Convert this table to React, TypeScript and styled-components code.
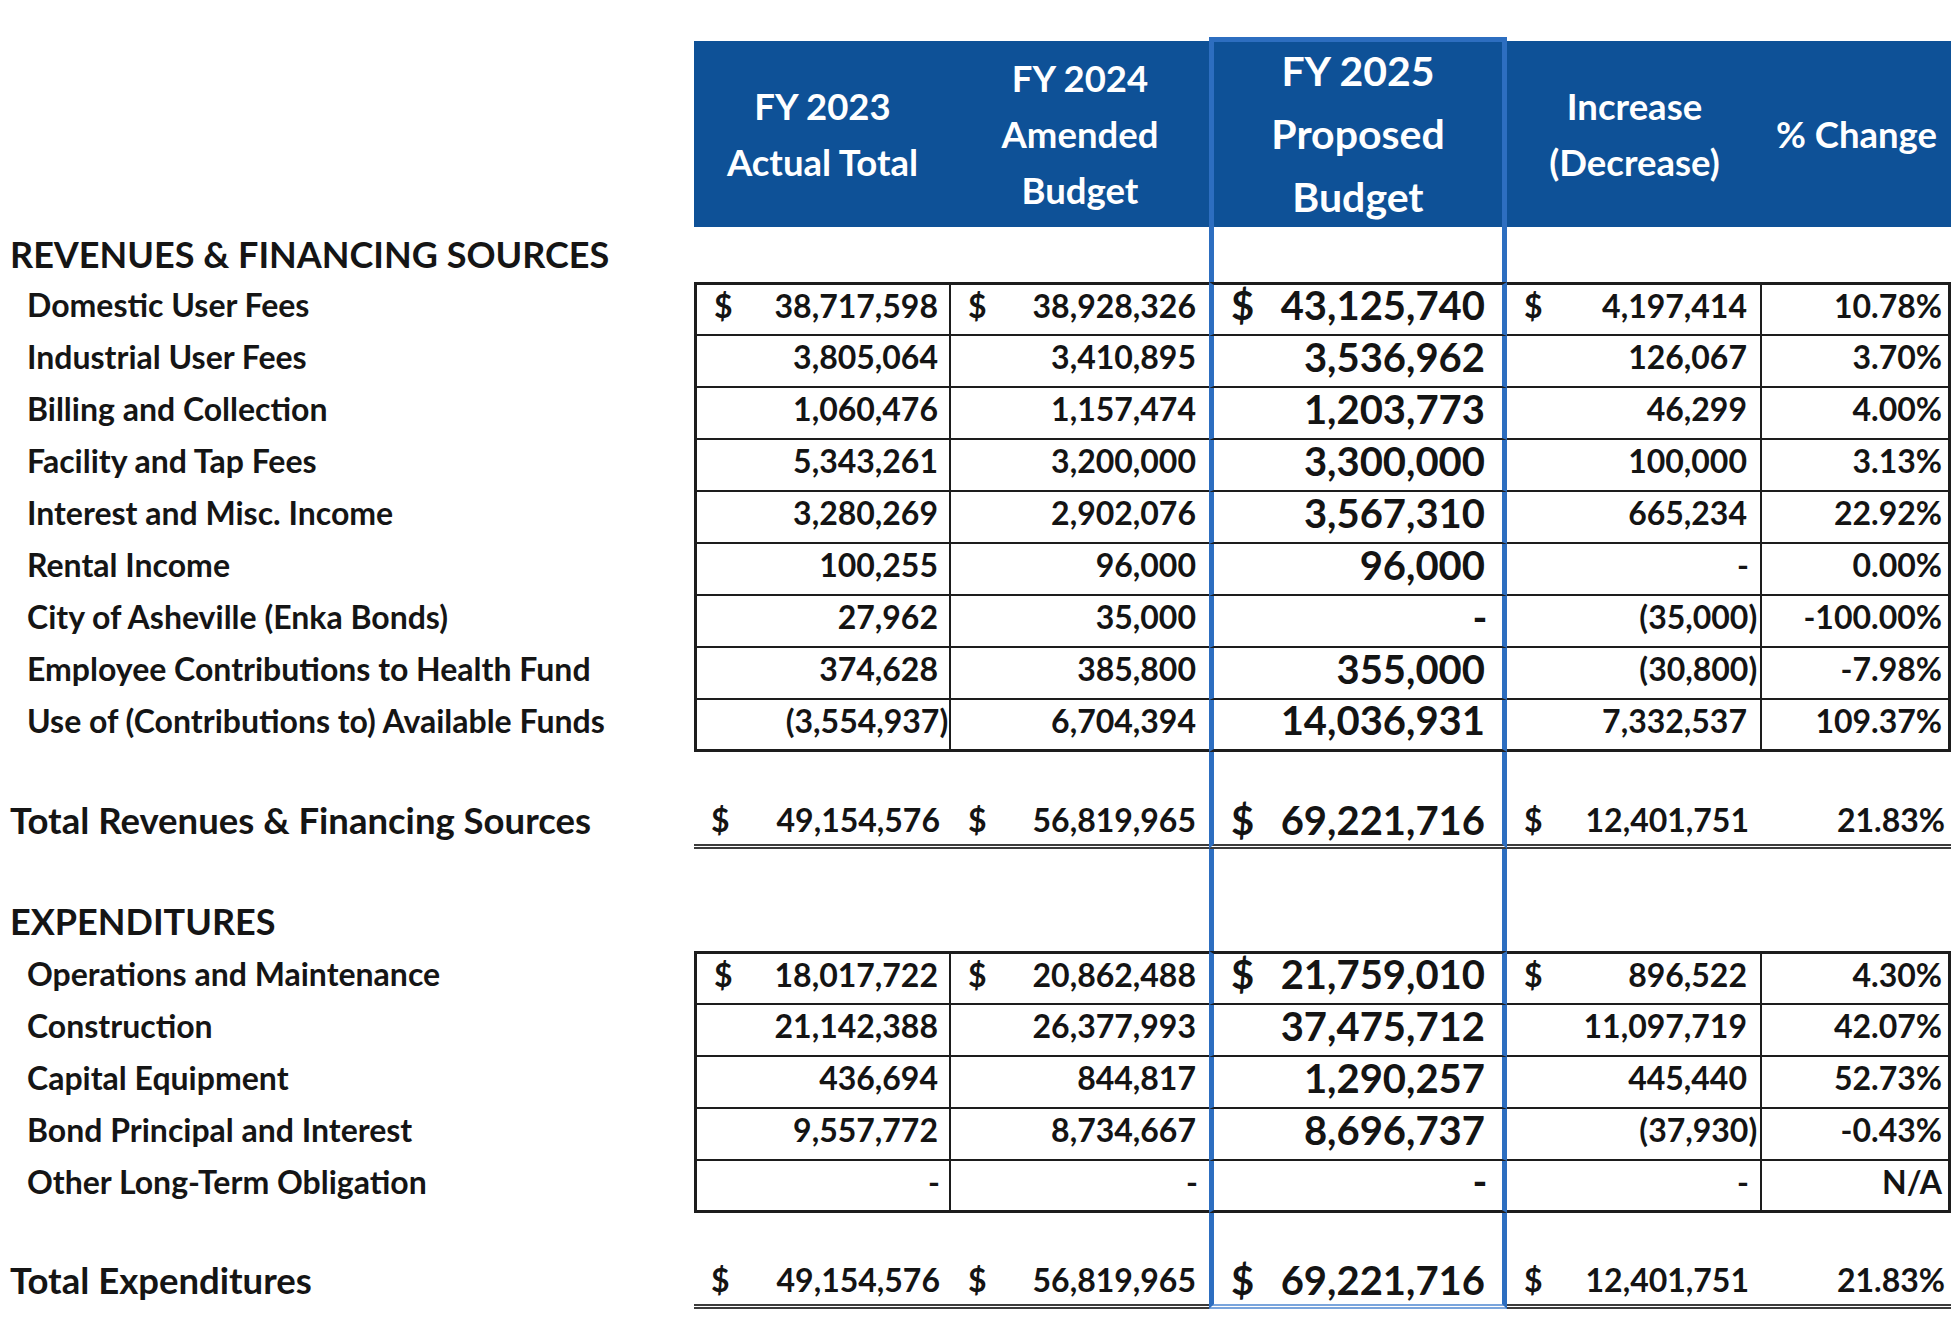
import React from "react";
import styled, { createGlobalStyle, css } from "styled-components";

const INK = "#1d1d1d";
const HEAD_FILL = "#0e5197";
const BLUE_LINE = "#2d6ec0";
const BLUE_SOFT = "#7aa5dc";
const COLS = "694px 257px 258px 298px 255px 189px";

type Col = 1 | 2 | 3 | 4 | 5;

const GlobalStyle = createGlobalStyle`
  html, body { margin: 0; padding: 0; background: #ffffff; }
  body {
    font-family: Lato, "Open Sans", "Liberation Sans", sans-serif;
    color: ${INK};
    -webkit-font-smoothing: antialiased;
  }
`;

const Sheet = styled.div`
  width: 1955px;
  padding-top: 41px;
  display: flex;
  flex-direction: column;
  box-sizing: border-box;
`;

const Row = styled.div<{ $h: number }>`
  display: grid;
  grid-template-columns: ${COLS};
  grid-template-rows: ${(p) => p.$h}px;
  height: ${(p) => p.$h}px;
  align-items: stretch;
`;

/* ---------- header ---------- */
const HeadCell = styled.div<{ $proposed?: boolean }>`
  box-sizing: border-box;
  background: ${HEAD_FILL};
  color: #ffffff;
  display: flex;
  align-items: center;
  justify-content: center;
  text-align: center;
  font-weight: 700;
  font-size: 36.5px;
  line-height: 56px;
  ${(p) =>
    p.$proposed &&
    css`
      margin-top: -4px;
      border: 5px solid ${BLUE_LINE};
      border-bottom: none;
      font-size: 41px;
      line-height: 63px;
      padding-bottom: 2px;
    `}
`;

const Blank = styled.div``;

/* ---------- labels ---------- */
const Label = styled.div<{ $kind: "item" | "section" | "total"; $bottom?: number; $lh?: number }>`
  display: flex;
  align-items: ${(p) => (p.$kind === "item" ? "center" : "flex-end")};
  padding-left: ${(p) => (p.$kind === "item" ? 27 : 10)}px;
  padding-bottom: ${(p) => p.$bottom ?? 0}px;
  font-weight: 700;
  font-size: ${(p) => (p.$kind === "item" ? 32 : p.$kind === "section" ? 36 : 36.5)}px;
  line-height: ${(p) => p.$lh ?? 52}px;
  white-space: nowrap;
  color: #151515;
  box-sizing: border-box;
`;

/* ---------- cells ---------- */
const sideEdges = (col: Col, boxed: boolean) => {
  if (col === 3) return css`border-left: 5px solid ${BLUE_LINE}; border-right: 5px solid ${BLUE_LINE};`;
  if (!boxed) return css``;
  if (col === 1) return css`border-left: 3px solid ${INK}; border-right: 2px solid ${INK};`;
  if (col === 4) return css`border-right: 2px solid ${INK};`;
  if (col === 5) return css`border-right: 3px solid ${INK};`;
  return css``;
};

const rightPad = (col: Col) => (col === 1 ? 11 : col === 3 ? 17 : col === 5 ? 6 : 13);

const DataCell = styled.div<{ $col: Col; $first?: boolean; $last?: boolean }>`
  box-sizing: border-box;
  display: flex;
  align-items: center;
  justify-content: ${(p) => (p.$col === 5 ? "flex-end" : "space-between")};
  padding: 0 ${(p) => rightPad(p.$col)}px 9px 17px;
  border-bottom: ${(p) => (p.$last ? 3 : 2)}px solid ${INK};
  ${(p) => p.$first && css`border-top: 3px solid ${INK};`}
  ${(p) => sideEdges(p.$col, true)}
  font-weight: 700;
  font-size: ${(p) => (p.$col === 3 ? 40 : 32)}px;
  white-space: nowrap;
  color: #141414;
`;

const TotalCell = styled.div<{ $col: Col; $closing?: boolean }>`
  box-sizing: border-box;
  display: flex;
  align-items: flex-end;
  justify-content: ${(p) => (p.$col === 5 ? "flex-end" : "space-between")};
  padding: 0 ${(p) => rightPad(p.$col)}px 0 17px;
  line-height: 48px;
  border-bottom: 5px double ${(p) => (p.$col === 3 && p.$closing ? BLUE_SOFT : "#3c3c3c")};
  ${(p) => sideEdges(p.$col, false)}
  font-weight: 700;
  font-size: ${(p) => (p.$col === 3 ? 40 : 32)}px;
  white-space: nowrap;
  color: #141414;
`;

const Channel = styled.div<{ $col?: Col }>`
  box-sizing: border-box;
  ${(p) => p.$col === 3 && css`border-left: 5px solid ${BLUE_LINE}; border-right: 5px solid ${BLUE_LINE};`}
`;

const Dollar = styled.span``;
const Amount = styled.span``;
const Close = styled.span`
  margin-right: -0.32em;
`;
const Dash = styled.span`
  margin-right: -0.06em;
`;

const Value: React.FC<{ v: string }> = ({ v }) => {
  if (v === "-") return <Dash>-</Dash>;
  if (v.startsWith("(") && v.endsWith(")"))
    return (
      <Amount>
        {v.slice(0, -1)}
        <Close>)</Close>
      </Amount>
    );
  return <Amount>{v}</Amount>;
};

type Line = [string, string, string, string, string, string];

const revenues: Line[] = [
  ["Domestic User Fees", "38,717,598", "38,928,326", "43,125,740", "4,197,414", "10.78%"],
  ["Industrial User Fees", "3,805,064", "3,410,895", "3,536,962", "126,067", "3.70%"],
  ["Billing and Collection", "1,060,476", "1,157,474", "1,203,773", "46,299", "4.00%"],
  ["Facility and Tap Fees", "5,343,261", "3,200,000", "3,300,000", "100,000", "3.13%"],
  ["Interest and Misc. Income", "3,280,269", "2,902,076", "3,567,310", "665,234", "22.92%"],
  ["Rental Income", "100,255", "96,000", "96,000", "-", "0.00%"],
  ["City of Asheville (Enka Bonds)", "27,962", "35,000", "-", "(35,000)", "-100.00%"],
  ["Employee Contributions to Health Fund", "374,628", "385,800", "355,000", "(30,800)", "-7.98%"],
  ["Use of (Contributions to) Available Funds", "(3,554,937)", "6,704,394", "14,036,931", "7,332,537", "109.37%"],
];

const expenditures: Line[] = [
  ["Operations and Maintenance", "18,017,722", "20,862,488", "21,759,010", "896,522", "4.30%"],
  ["Construction", "21,142,388", "26,377,993", "37,475,712", "11,097,719", "42.07%"],
  ["Capital Equipment", "436,694", "844,817", "1,290,257", "445,440", "52.73%"],
  ["Bond Principal and Interest", "9,557,772", "8,734,667", "8,696,737", "(37,930)", "-0.43%"],
  ["Other Long-Term Obligation", "-", "-", "-", "-", "N/A"],
];

const totals: string[] = ["49,154,576", "56,819,965", "69,221,716", "12,401,751", "21.83%"];

const DataBlock: React.FC<{ lines: Line[] }> = ({ lines }) => (
  <>
    {lines.map((line, i) => {
      const first = i === 0;
      const last = i === lines.length - 1;
      return (
        <Row key={line[0]} $h={first ? 54 : 52}>
          <Label $kind="item" $bottom={first ? 8 : 10} $lh={42}>{line[0]}</Label>
          {([1, 2, 3, 4, 5] as Col[]).map((c) => (
            <DataCell key={c} $col={c} $first={first} $last={last}>
              {first && c < 5 ? <Dollar>$</Dollar> : <span />}
              <Value v={line[c]} />
            </DataCell>
          ))}
        </Row>
      );
    })}
  </>
);

const SectionRow: React.FC<{ title: string; h: number; bottom: number; lh: number }> = ({ title, h, bottom, lh }) => (
  <Row $h={h}>
    <Label $kind="section" $bottom={bottom} $lh={lh}>{title}</Label>
    <Channel $col={1} />
    <Channel $col={2} />
    <Channel $col={3} />
    <Channel $col={4} />
    <Channel $col={5} />
  </Row>
);

const TotalRow: React.FC<{ title: string; h: number; closing?: boolean }> = ({ title, h, closing }) => (
  <Row $h={h}>
    <Label $kind="total" $bottom={5} $lh={48}>{title}</Label>
    {([1, 2, 3, 4, 5] as Col[]).map((c) => (
      <TotalCell key={c} $col={c} $closing={closing}>
        {c < 5 ? <Dollar>$</Dollar> : <span />}
        <Amount>{totals[c - 1]}</Amount>
      </TotalCell>
    ))}
  </Row>
);

export default function App() {
  return (
    <>
      <GlobalStyle />
      <Sheet>
        <Row $h={186}>
          <Blank />
          <HeadCell>
            FY 2023
            <br />
            Actual Total
          </HeadCell>
          <HeadCell>
            FY 2024
            <br />
            Amended
            <br />
            Budget
          </HeadCell>
          <HeadCell $proposed>
            FY 2025
            <br />
            Proposed
            <br />
            Budget
          </HeadCell>
          <HeadCell>
            Increase
            <br />
            (Decrease)
          </HeadCell>
          <HeadCell>% Change</HeadCell>
        </Row>

        <SectionRow title="REVENUES & FINANCING SOURCES" h={55} bottom={2} lh={52} />
        <DataBlock lines={revenues} />
        <TotalRow title="Total Revenues & Financing Sources" h={97} />

        <SectionRow title="EXPENDITURES" h={102} bottom={3} lh={54} />
        <DataBlock lines={expenditures} />
        <TotalRow title="Total Expenditures" h={96} closing />
      </Sheet>
    </>
  );
}
